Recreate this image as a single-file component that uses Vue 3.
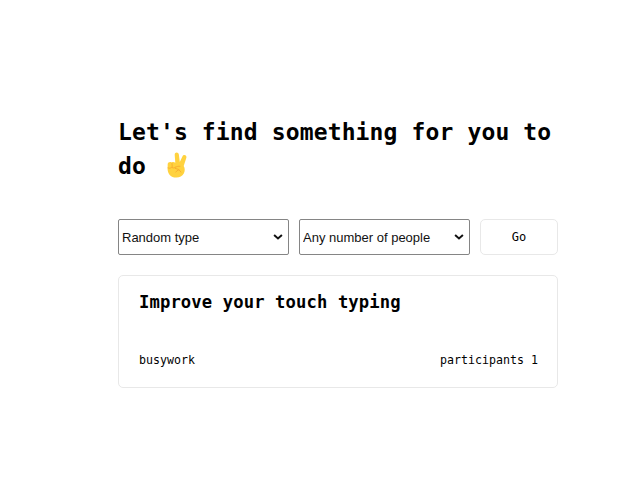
<script setup>
import { ref } from 'vue'

const kind = ref('Random type')
const people = ref('Any number of people')
const activity = { title: 'Improve your touch typing', type: 'busywork', participants: 1 }
</script>

<template>
  <main class="page">
    <h1 class="heading">
      <span>Let's find something for you to</span>
      <span class="line">do
        <svg class="hand" viewBox="0 0 20 26" aria-hidden="true">
          <path class="skin" d="M.7 12C.7 10.1 3.2 9.4 4.8 10.4C5.8 9.8 7.4 10 8.3 10.8L7.7 3C7.5 -.1 11.5 -.2 11.9 2.7L12.8 10L15.4 4.4C16.6 1.8 20.2 3.1 19.3 5.9L16.7 14C18.2 16.2 17.9 19.4 16.8 21.6C15.2 24.6 12.5 25.7 9 25.6C4 25.3 .8 22.1 .6 17.2Z" />
          <path class="crease" d="M1 16Q3 16.9 4.7 15.5Q7 16.9 8.8 15.1M5 11.3L5.2 15.1M8.8 15.1Q10.8 13.7 13 14.2M8.2 16.3Q12.2 16.4 14 20M11.8 17.8Q9.6 18.4 8.8 20" />
        </svg>
      </span>
    </h1>
    <form class="filters" @submit.prevent>
      <label class="field">
        <select v-model="kind" class="select"><option>Random type</option></select>
        <svg class="chevron" viewBox="0 0 10 6"><path d="M1.1 1.1L5 4.5L8.9 1.1" /></svg>
      </label>
      <label class="field">
        <select v-model="people" class="select"><option>Any number of people</option></select>
        <svg class="chevron" viewBox="0 0 10 6"><path d="M1.1 1.1L5 4.5L8.9 1.1" /></svg>
      </label>
      <button class="go">Go</button>
    </form>
    <section class="card">
      <h2 class="title">{{ activity.title }}</h2>
      <div class="meta">
        <span>{{ activity.type }}</span>
        <span>participants {{ activity.participants }}</span>
      </div>
    </section>
  </main>
</template>

<style>
body { background: #fff; }
</style>

<style scoped>
.page {
  box-sizing: border-box;
  width: 440px;
  margin-left: 118px;
  padding-top: 115px;
  color: #000;
  font-family: Consolas, "DejaVu Sans Mono", monospace;
}
.heading {
  display: flex;
  flex-direction: column;
  height: 104px;
  margin: 0;
  font-size: 23px;
  line-height: 34px;
  letter-spacing: .13px;
  white-space: nowrap;
}
.line { display: flex; align-items: center; gap: 21px; }
.hand { width: 20px; height: 26px; margin-bottom: 2px; }
.skin { fill: #ffd23f; }
.crease { fill: none; stroke: #f7ac30; stroke-width: .9; stroke-linecap: round; }
.filters {
  display: grid;
  grid-template-columns: 171px 171px 78px;
  gap: 10px;
  height: 36px;
}
.field { position: relative; display: flex; }
.select {
  appearance: none;
  box-sizing: border-box;
  width: 100%;
  height: 36px;
  padding: 0 25px 0 3px;
  border: 1px solid #858585;
  border-radius: 2px;
  background: #fff;
  color: #111;
  font: 13px "Liberation Sans", Arial, sans-serif;
}
.chevron {
  position: absolute;
  right: 6px;
  top: 15px;
  width: 10px;
  height: 6px;
  fill: none;
  stroke: #111;
  stroke-width: 2;
}
.go {
  padding: 0;
  border: 1px solid #e8e8e8;
  border-radius: 5px;
  background: #fff;
  color: #000;
  font: 12px Consolas, "DejaVu Sans Mono", monospace;
}
.card {
  box-sizing: border-box;
  height: 113px;
  margin-top: 20px;
  padding: 14px 19px 0 20px;
  border: 1px solid #e8e8e8;
  border-radius: 5px;
}
.title {
  margin: 0;
  font-size: 17.2px;
  line-height: 24px;
  letter-spacing: .12px;
}
.meta {
  display: flex;
  justify-content: space-between;
  margin-top: 36px;
  font-size: 11.6px;
  line-height: 20px;
  letter-spacing: .02px;
}
</style>
